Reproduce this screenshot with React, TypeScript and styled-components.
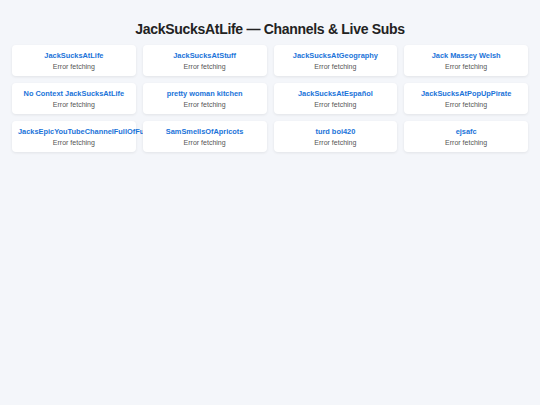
import React from "react";
import styled, { createGlobalStyle } from "styled-components";

const Global = createGlobalStyle`
  html, body { margin: 0; padding: 0; background: #f4f6fa; }
  body { font-family: "Liberation Sans", Arial, sans-serif; }
`;

const Page = styled.div`
  padding: 12px;
  min-height: 405px;
  box-sizing: border-box;
  background: #f4f6fa;
`;

const Title = styled.h1`
  margin: 8px 0 7px;
  font-size: 14px;
  line-height: 18px;
  letter-spacing: -0.3px;
  font-weight: 700;
  color: #222;
  text-align: center;
`;

const Grid = styled.div`
  display: grid;
  grid-template-columns: repeat(4, 1fr);
  gap: 7px;
`;

const Card = styled.div`
  background: #fff;
  border-radius: 4px;
  box-shadow: 0 1px 3px rgba(0, 0, 0, 0.08);
  padding: 6px 6px 5px;
  text-align: center;
  min-width: 0;
`;

const Name = styled.div`
  font-size: 7.4px;
  line-height: 10px;
  font-weight: 700;
  color: #1a73d9;
  white-space: nowrap;
`;

const Status = styled.div`
  margin-top: 1px;
  font-size: 7px;
  line-height: 9px;
  color: #555;
`;

const channels = [
  "JackSucksAtLife",
  "JackSucksAtStuff",
  "JackSucksAtGeography",
  "Jack Massey Welsh",
  "No Context JackSucksAtLife",
  "pretty woman kitchen",
  "JackSucksAtEspañol",
  "JackSucksAtPopUpPirate",
  "JacksEpicYouTubeChannelFullOfFun",
  "SamSmellsOfApricots",
  "turd boi420",
  "ejsafc",
];

export default function App() {
  return (
    <Page>
      <Global />
      <Title>JackSucksAtLife — Channels &amp; Live Subs</Title>
      <Grid>
        {channels.map((c) => (
          <Card key={c}>
            <Name>{c}</Name>
            <Status>Error fetching</Status>
          </Card>
        ))}
      </Grid>
    </Page>
  );
}
